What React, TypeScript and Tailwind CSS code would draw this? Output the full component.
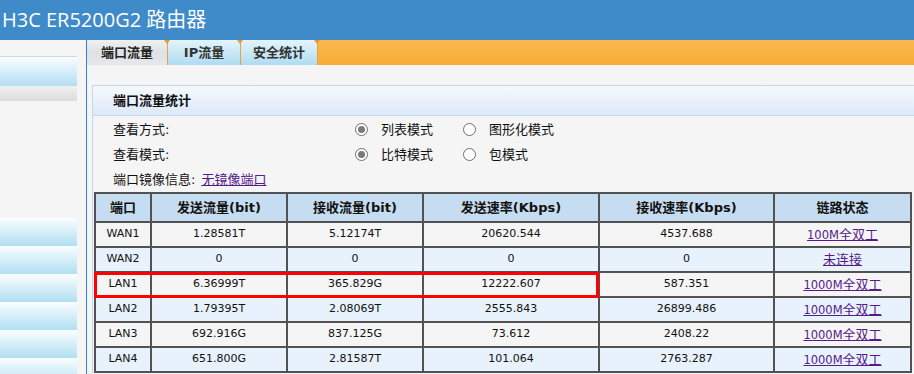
const rows = [
  ["WAN1", "1.28581T", "5.12174T", "20620.544", "4537.688", "100M全双工"],
  ["WAN2", "0", "0", "0", "0", "未连接"],
  ["LAN1", "6.36999T", "365.829G", "12222.607", "587.351", "1000M全双工"],
  ["LAN2", "1.79395T", "2.08069T", "2555.843", "26899.486", "1000M全双工"],
  ["LAN3", "692.916G", "837.125G", "73.612", "2408.22", "1000M全双工"],
  ["LAN4", "651.800G", "2.81587T", "101.064", "2763.287", "1000M全双工"],
];

const heads = ["端口", "发送流量(bit)", "接收流量(bit)", "发送速率(Kbps)", "接收速率(Kbps)", "链路状态"];
const widths = ["w-[56px]", "w-[136px]", "w-[136px]", "w-[176px]", "w-[175px]", "w-[137px]"];

function Radio({ checked }: { checked?: boolean }) {
  return (
    <span className="w-[13px] h-[13px] rounded-full border border-[#707070] bg-white flex items-center justify-center shrink-0">
      {checked && <span className="w-[7px] h-[7px] rounded-full bg-[#7a7a7a]" />}
    </span>
  );
}

function Option({ label, checked, w }: { label: string; checked?: boolean; w: string }) {
  return (
    <div className={`flex items-center ${w}`}>
      <Radio checked={checked} />
      <span className="ml-[13px]">{label}</span>
    </div>
  );
}

function Sep() {
  return (
    <div className="relative w-[1px] bg-[#e9a23a]">
      <span className="absolute -left-[3px] top-0 border-l-[3px] border-r-[3px] border-t-[4px] border-l-transparent border-r-transparent border-t-[#eb9a28]" />
    </div>
  );
}

function Status({ text }: { text: string }) {
  const m = text.match(/^([0-9A-Z]+)(.*)$/);
  return (
    <a className="text-[#551a8b] underline text-[13px] cursor-pointer">
      {m ? (
        <>
          <span className="text-[11.5px]">{m[1]}</span>
          {m[2]}
        </>
      ) : (
        text
      )}
    </a>
  );
}

export default function App() {
  return (
    <div className="w-[914px] h-[374px] overflow-hidden bg-[#f5f5f5] text-[#111] font-['DejaVu_Sans','Noto_Sans_CJK_SC',sans-serif]">
      <div className="h-[40px] bg-[#3f8ac8] flex items-center pl-[2px] text-white text-[20px] font-['Open_Sans','Noto_Sans_CJK_SC',sans-serif]">
        H3C ER5200G2 路由器
      </div>
      <div className="flex h-[334px]">
        <div className="w-[87px] shrink-0 border-r border-[#2b7fe6]">
          <div className="w-[77px] mt-[16px] h-[30px] border-t border-[#c6dbee] bg-linear-to-b from-[#fafdff] to-[#b2dff3]" />
          <div className="w-[77px] h-[15px] bg-linear-to-b from-[#f1f1f1] to-[#dcdcdc]" />
          <div className="mt-[117px]">
            {[0, 1, 2, 3, 4, 5].map((i) => (
              <div key={i} className="w-[77px] h-[28px] bg-linear-to-b from-[#fbfeff] to-[#b0dff3]" />
            ))}
          </div>
        </div>
        <div className="flex-1 min-w-0 overflow-hidden">
          <div className="h-[25px] flex bg-linear-to-b from-[#f9b84e] to-[#f7ad33] text-[13px] font-bold">
            <div className="w-[80px] flex items-center justify-center text-[#222] bg-linear-to-b from-[#eef0f2] via-[#dee1e5] to-[#e6e8eb]">
              端口流量
            </div>
            <Sep />
            <div className="w-[72px] flex items-center justify-center text-[#333] bg-linear-to-b from-[#e4f4fb] to-[#aedcf1]">
              IP流量
            </div>
            <Sep />
            <div className="w-[76px] flex items-center justify-center text-[#333] bg-linear-to-b from-[#e4f4fb] to-[#aedcf1]">
              安全统计
            </div>
            <Sep />
          </div>
          <div className="ml-[5px] mt-[20px] border-l border-t border-[#c3d8ee] text-[13px]">
            <div className="h-[30px] border-b border-[#c3d8ee] bg-linear-to-b from-[#f6f9fe] to-[#dce9f9] flex items-center pl-[20px] font-bold">
              端口流量统计
            </div>
            <div className="pt-[1px]">
              <div className="h-[25px] flex items-center pl-[20px]">
                <span className="w-[242px]">查看方式:</span>
                <Option label="列表模式" checked w="w-[108px]" />
                <Option label="图形化模式" w="w-[120px]" />
              </div>
              <div className="h-[25px] flex items-center pl-[20px]">
                <span className="w-[242px]">查看模式:</span>
                <Option label="比特模式" checked w="w-[108px]" />
                <Option label="包模式" w="w-[120px]" />
              </div>
              <div className="h-[25px] flex items-center pl-[20px]">
                <span>端口镜像信息:</span>
                <a className="ml-[6px] text-[#551a8b] underline cursor-pointer">无镜像端口</a>
              </div>
            </div>
            <div className="relative ml-[1px] w-[818px]">
              <table className="table-fixed border-separate border-spacing-0 w-[818px] border-l-2 border-t-2 border-[#525252]">
                <thead>
                  <tr className="h-[29px] bg-[#c6dcf0]">
                    {heads.map((h, i) => (
                      <th key={h} className={`${widths[i]} border-r-2 border-b-2 border-[#525252] text-[13px] font-bold text-center align-middle p-0`}>
                        {h}
                      </th>
                    ))}
                  </tr>
                </thead>
                <tbody>
                  {rows.map((r, ri) => (
                    <tr key={r[0]} className={`h-[25px] ${ri % 2 === 0 ? "bg-[#f5f5f5]" : "bg-[#e8f2fc]"}`}>
                      {r.map((c, ci) => (
                        <td key={ci} className="border-r-2 border-b-2 border-[#525252] text-center align-middle p-0 text-[11px]">
                          {ci === 5 ? <Status text={c} /> : c}
                        </td>
                      ))}
                    </tr>
                  ))}
                </tbody>
              </table>
              <div className="absolute left-0 top-[80px] w-[505px] h-[26px] border-[3px] border-[#ff0000]" />
            </div>
          </div>
        </div>
      </div>
    </div>
  );
}
